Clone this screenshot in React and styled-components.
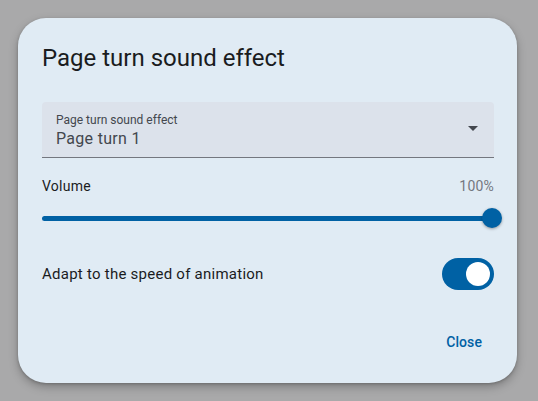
import React from "react";
import styled, { createGlobalStyle } from "styled-components";

const Global = createGlobalStyle`
  html, body { margin: 0; padding: 0; }
  body {
    background: #a9a9aa;
    font-family: Roboto, "Noto Sans", "Liberation Sans", sans-serif;
    width: 538px;
    height: 401px;
    overflow: hidden;
  }
`;

const Page = styled.div`
  padding: 18px 0 0 18px;
`;

const Dialog = styled.div`
  width: 499px;
  box-sizing: border-box;
  background: #e0ebf4;
  border-radius: 28px;
  padding: 24px 24px 21px 24px;
  box-shadow: 0 4px 10px rgba(0, 0, 0, 0.25), 0 1px 3px rgba(0, 0, 0, 0.2);
  display: flex;
  flex-direction: column;
`;

const Title = styled.h2`
  margin: 0;
  font-size: 24px;
  line-height: 32px;
  font-weight: 400;
  color: #1a1c1e;
`;

const SelectField = styled.div`
  margin-top: 28px;
  width: 452px;
  height: 56px;
  box-sizing: border-box;
  background: #dce2eb;
  border-radius: 4px 4px 0 0;
  border-bottom: 1px solid #74777f;
  padding: 8px 12px 0 14px;
  display: flex;
  align-items: center;
`;

const SelectTexts = styled.div`
  flex: 1;
  display: flex;
  flex-direction: column;
  margin-top: -6px;
`;

const SelectLabel = styled.span`
  font-size: 12px;
  line-height: 16px;
  color: #43474e;
`;

const SelectValue = styled.span`
  font-size: 16px;
  line-height: 22px;
  color: #43474e;
  letter-spacing: 0.3px;
`;

const Arrow = styled.svg`
  width: 24px;
  height: 24px;
  fill: #43474e;
  margin-top: -12px;
  margin-right: -3px;
`;

const LabelRow = styled.div`
  margin-top: 18px;
  width: 452px;
  display: flex;
  justify-content: space-between;
  align-items: center;
  font-size: 14px;
  line-height: 20px;
`;

const RowLabel = styled.span`
  color: #1a1c1e;
  font-size: ${(p) => (p.$large ? "15px" : "14px")};
  letter-spacing: 0.25px;
`;

const ValueText = styled.span`
  color: #74777f;
  font-size: 14px;
  letter-spacing: 0.2px;
`;

const SliderBox = styled.div`
  margin-top: 12px;
  width: 450px;
  height: 20px;
  position: relative;
  display: flex;
  align-items: center;
`;

const Track = styled.div`
  width: 100%;
  height: 5px;
  border-radius: 3px;
  background: #0061a4;
  margin-top: 1px;
`;

const Thumb = styled.div`
  position: absolute;
  top: 0;
  width: 20px;
  height: 20px;
  border-radius: 50%;
  background: #0061a4;
  transform: translateX(-50%);
  box-shadow: 0 1px 3px rgba(0, 0, 0, 0.35);
`;

const SwitchRow = styled.div`
  margin-top: 30px;
  width: 452px;
  height: 32px;
  display: flex;
  justify-content: space-between;
  align-items: center;
  line-height: 20px;
`;

const SwitchTrack = styled.div`
  width: 52px;
  height: 32px;
  box-sizing: border-box;
  border-radius: 16px;
  background: ${(p) => (p.$on ? "#0061a4" : "#e0e2ec")};
  display: flex;
  align-items: center;
  justify-content: ${(p) => (p.$on ? "flex-end" : "flex-start")};
  padding: 0 4px;
`;

const SwitchThumb = styled.div`
  width: 24px;
  height: 24px;
  border-radius: 50%;
  background: #ffffff;
`;

const Actions = styled.div`
  margin-top: 32px;
  display: flex;
  justify-content: flex-end;
  width: 452px;
`;

const TextButton = styled.button`
  height: 40px;
  padding: 0 12px;
  border: none;
  background: transparent;
  color: #0061a4;
  font-family: Roboto, "Noto Sans", sans-serif;
  font-size: 14px;
  font-weight: 500;
  letter-spacing: 0.1px;
  border-radius: 20px;
  cursor: pointer;
`;

export default function App() {
  const volume = 100;
  return (
    <>
      <Global />
      <Page>
        <Dialog>
          <Title>Page turn sound effect</Title>
          <SelectField>
            <SelectTexts>
              <SelectLabel>Page turn sound effect</SelectLabel>
              <SelectValue>Page turn 1</SelectValue>
            </SelectTexts>
            <Arrow viewBox="0 0 24 24">
              <path d="M7 10l5 5 5-5z" />
            </Arrow>
          </SelectField>
          <LabelRow>
            <RowLabel>Volume</RowLabel>
            <ValueText>{volume}%</ValueText>
          </LabelRow>
          <SliderBox>
            <Track />
            <Thumb style={{ left: `${volume}%` }} />
          </SliderBox>
          <SwitchRow>
            <RowLabel $large>Adapt to the speed of animation</RowLabel>
            <SwitchTrack $on>
              <SwitchThumb />
            </SwitchTrack>
          </SwitchRow>
          <Actions>
            <TextButton>Close</TextButton>
          </Actions>
        </Dialog>
      </Page>
    </>
  );
}
